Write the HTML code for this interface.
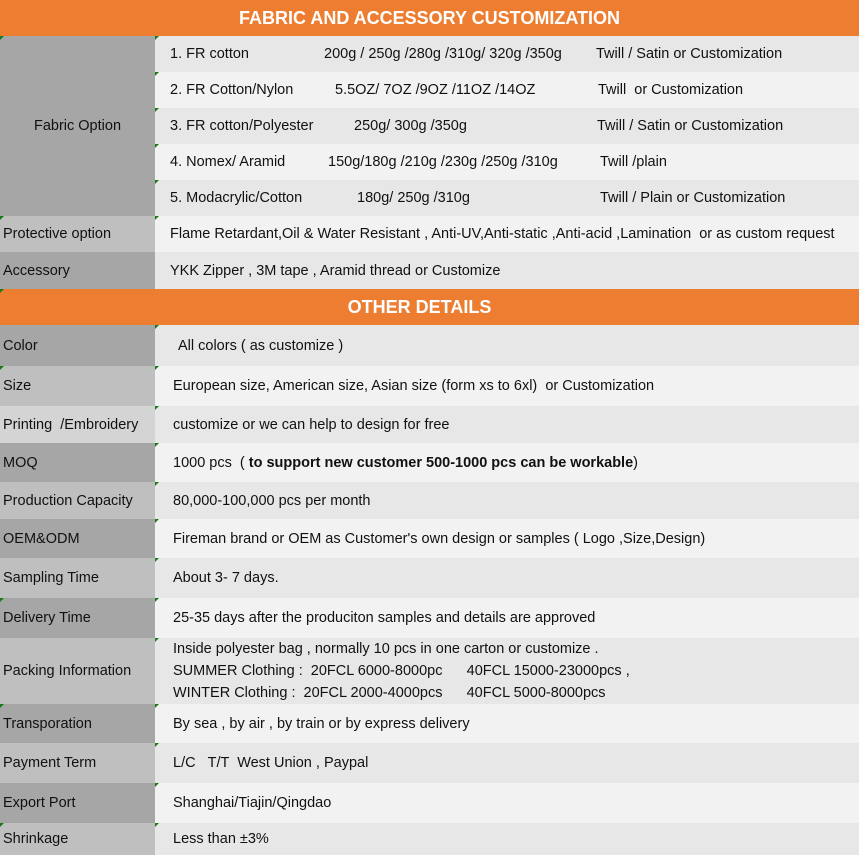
<!DOCTYPE html><html><head><meta charset="utf-8"><style>
*{margin:0;padding:0;box-sizing:border-box}
body{width:859px;height:855px;overflow:hidden;background:#f2f2f2;font-family:"Liberation Sans",sans-serif;font-size:14.5px;color:#111;position:relative}
.r{position:absolute;left:0;width:859px}
.l{position:absolute;left:0;top:0;bottom:0;width:155px;display:flex;align-items:center;padding-left:3px}
.v{position:absolute;left:155px;right:0;top:0;bottom:0;display:flex;align-items:center;padding-left:18px;white-space:nowrap}
.h{background:#ed7d31;color:#fff;font-weight:bold;font-size:18px;display:flex;align-items:center;justify-content:center}
.d{background:#a6a6a6}.m{background:#bfbfbf}.p{background:#d4d4d4}
.a{background:#e7e7e7}.b{background:#f2f2f2}
.s{position:absolute;top:0;bottom:0;display:flex;align-items:center;white-space:nowrap}
.t{position:absolute;width:0;height:0;border-top:4px solid #1a7a1a;border-right:4px solid transparent}
</style></head><body>
<div class="r h" style="top:0;height:36px;padding-left:0">FABRIC AND ACCESSORY CUSTOMIZATION</div>
<div class="r" style="top:36px;height:180px"><div class="l d" style="justify-content:center;padding-left:0">Fabric Option</div></div>
<div class="r a" style="top:36px;height:36px;left:155px;width:704px"><span class="s" style="left:15px">1. FR cotton</span><span class="s" style="left:169px">200g / 250g /280g /310g/ 320g /350g</span><span class="s" style="left:441px">Twill / Satin or Customization</span></div>
<div class="r b" style="top:72px;height:36px;left:155px;width:704px"><span class="s" style="left:15px">2. FR Cotton/Nylon</span><span class="s" style="left:180px">5.5OZ/ 7OZ /9OZ /11OZ /14OZ</span><span class="s" style="left:443px">Twill &nbsp;or Customization</span></div>
<div class="r a" style="top:108px;height:36px;left:155px;width:704px"><span class="s" style="left:15px">3. FR cotton/Polyester</span><span class="s" style="left:199px">250g/ 300g /350g</span><span class="s" style="left:442px">Twill / Satin or Customization</span></div>
<div class="r b" style="top:144px;height:36px;left:155px;width:704px"><span class="s" style="left:15px">4. Nomex/ Aramid</span><span class="s" style="left:173px">150g/180g /210g /230g /250g /310g</span><span class="s" style="left:445px">Twill /plain</span></div>
<div class="r a" style="top:180px;height:36px;left:155px;width:704px"><span class="s" style="left:15px">5. Modacrylic/Cotton</span><span class="s" style="left:202px">180g/ 250g /310g</span><span class="s" style="left:445px">Twill / Plain or Customization</span></div>
<div class="r" style="top:216px;height:36px"><div class="l m">Protective option</div><div class="v b" style="padding-left:15px">Flame Retardant,Oil &amp; Water Resistant , Anti-UV,Anti-static ,Anti-acid ,Lamination &nbsp;or as custom request</div></div>
<div class="r" style="top:252px;height:37px"><div class="l d">Accessory</div><div class="v a" style="padding-left:15px">YKK Zipper , 3M tape , Aramid thread or Customize</div></div>
<div class="r h" style="top:289px;height:36px;padding-right:20px">OTHER DETAILS</div>
<div class="r" style="top:325px;height:41px"><div class="l d">Color</div><div class="v a" style="padding-left:23px">All colors ( as customize )</div></div>
<div class="r" style="top:366px;height:40px"><div class="l m">Size</div><div class="v b">European size, American size, Asian size (form xs to 6xl) &nbsp;or Customization</div></div>
<div class="r" style="top:406px;height:37px"><div class="l p">Printing &nbsp;/Embroidery</div><div class="v a">customize or we can help to design for free</div></div>
<div class="r" style="top:443px;height:39px"><div class="l d">MOQ</div><div class="v b">1000 pcs &nbsp;(&nbsp;<b>to support new customer 500-1000 pcs can be workable</b>)</div></div>
<div class="r" style="top:482px;height:37px"><div class="l m">Production Capacity</div><div class="v a">80,000-100,000 pcs per month</div></div>
<div class="r" style="top:519px;height:39px"><div class="l d">OEM&amp;ODM</div><div class="v b">Fireman brand or OEM as Customer's own design or samples ( Logo ,Size,Design)</div></div>
<div class="r" style="top:558px;height:40px"><div class="l m">Sampling Time</div><div class="v a">About 3- 7 days.</div></div>
<div class="r" style="top:598px;height:40px"><div class="l d">Delivery Time</div><div class="v b">25-35 days after the produciton samples and details are approved</div></div>
<div class="r" style="top:638px;height:66px"><div class="l m">Packing Information</div><div class="v a" style="line-height:22px;align-items:center"><div>Inside polyester bag , normally 10 pcs in one carton or customize .<br>SUMMER Clothing : &nbsp;20FCL 6000-8000pc &nbsp;&nbsp;&nbsp;&nbsp;&nbsp;40FCL 15000-23000pcs ,<br>WINTER Clothing : &nbsp;20FCL 2000-4000pcs &nbsp;&nbsp;&nbsp;&nbsp;&nbsp;40FCL 5000-8000pcs</div></div></div>
<div class="r" style="top:704px;height:39px"><div class="l d">Transporation</div><div class="v b">By sea , by air , by train or by express delivery</div></div>
<div class="r" style="top:743px;height:40px"><div class="l m">Payment Term</div><div class="v a">L/C &nbsp;&nbsp;T/T &nbsp;West Union , Paypal</div></div>
<div class="r" style="top:783px;height:40px"><div class="l d">Export Port</div><div class="v b">Shanghai/Tiajin/Qingdao</div></div>
<div class="r" style="top:823px;height:32px"><div class="l m">Shrinkage</div><div class="v a">Less than ±3%</div></div>
<div class="t" style="left:0;top:36px"></div><div class="t" style="left:155px;top:36px"></div><div class="t" style="left:155px;top:72px"></div><div class="t" style="left:155px;top:108px"></div><div class="t" style="left:155px;top:144px"></div><div class="t" style="left:155px;top:180px"></div><div class="t" style="left:0;top:216px"></div><div class="t" style="left:155px;top:216px"></div><div class="t" style="left:0;top:289px"></div><div class="t" style="left:155px;top:325px"></div><div class="t" style="left:0;top:366px"></div><div class="t" style="left:155px;top:366px"></div><div class="t" style="left:155px;top:406px"></div><div class="t" style="left:155px;top:443px"></div><div class="t" style="left:155px;top:482px"></div><div class="t" style="left:155px;top:519px"></div><div class="t" style="left:155px;top:558px"></div><div class="t" style="left:0;top:598px"></div><div class="t" style="left:155px;top:598px"></div><div class="t" style="left:155px;top:638px"></div><div class="t" style="left:0;top:704px"></div><div class="t" style="left:155px;top:704px"></div><div class="t" style="left:155px;top:743px"></div><div class="t" style="left:155px;top:783px"></div><div class="t" style="left:0;top:823px"></div><div class="t" style="left:155px;top:823px"></div>
</body></html>
